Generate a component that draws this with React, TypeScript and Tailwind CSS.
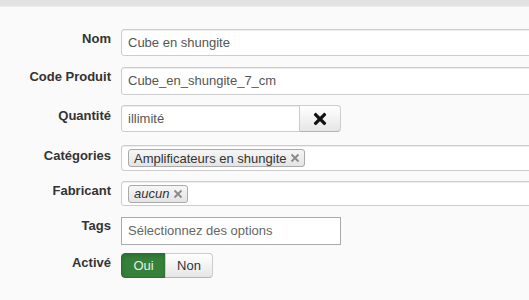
import { FaTimes } from 'react-icons/fa'

const font = { fontFamily: '"Liberation Sans", Arial, sans-serif' }

function Label({ children }: { children: React.ReactNode }) {
  return (
    <div className="w-[111px] shrink-0 text-right text-[13px] font-bold leading-[16px] text-[#333] pt-[2px]">
      {children}
    </div>
  )
}

function ChipX() {
  return (
    <svg width="10" height="10" viewBox="0 0 10 10" className="ml-[4px]">
      <path d="M1.5 1.5 L8.5 8.5 M8.5 1.5 L1.5 8.5" stroke="#8a8a8a" strokeWidth="1.8" />
    </svg>
  )
}

function Chip({ children, italic }: { children: React.ReactNode; italic?: boolean }) {
  return (
    <span className="flex items-center h-[18px] pl-[5px] pr-[4px] rounded-[3px] border border-[#aaa] bg-gradient-to-b from-[#f6f6f6] to-[#e4e4e4] text-[13px] text-[#333] leading-[13px]">
      <span className={italic ? 'italic' : ''}>{children}</span>
      <ChipX />
    </span>
  )
}

const inputCls =
  'h-full bg-white border border-[#ccc] rounded-[3px] shadow-[inset_0_1px_1px_rgba(0,0,0,0.075)] text-[13px] text-[#555] flex items-center pl-[6px]'

export default function App() {
  return (
    <div className="w-[529px] h-[300px] bg-[#fafafa] overflow-hidden" style={font}>
      <div className="h-[7px] bg-[#e3e3e3] border-b border-[#ececec]" />

      <div className="pt-[22px]">
        <div className="flex h-[38px]">
          <Label>Nom</Label>
          <div className="ml-[10px] h-[27px] w-[450px] shrink-0">
            <div className={inputCls}>Cube en shungite</div>
          </div>
        </div>

        <div className="flex h-[38px]">
          <Label>Code Produit</Label>
          <div className="ml-[10px] h-[28px] w-[450px] shrink-0">
            <div className={inputCls}>Cube_en_shungite_7_cm</div>
          </div>
        </div>

        <div className="flex h-[40px]">
          <Label><span className="block pt-[1px]">Quantité</span></Label>
          <div className="ml-[10px] h-[27px] flex shrink-0">
            <div className={inputCls + ' w-[179px] rounded-r-none'}>illimité</div>
            <button className="w-[42px] h-full -ml-px flex items-center justify-center border border-[#ccc] border-b-[#b3b3b3] rounded-r-[4px] bg-gradient-to-b from-white to-[#e6e6e6] text-[#111]">
              <FaTimes size={18} />
            </button>
          </div>
        </div>

        <div className="flex h-[36px]">
          <Label><span className="block pt-[1px]">Catégories</span></Label>
          <div className="ml-[10px] h-[26px] w-[450px] shrink-0">
            <div className={inputCls + ' pl-[6px] border-[#c8c8c8]'}>
              <Chip>Amplificateurs en shungite</Chip>
            </div>
          </div>
        </div>

        <div className="flex h-[36px]">
          <Label>Fabricant</Label>
          <div className="ml-[10px] h-[25px] w-[450px] shrink-0">
            <div className={inputCls + ' pl-[6px] border-[#c8c8c8]'}>
              <Chip italic>aucun</Chip>
            </div>
          </div>
        </div>

        <div className="flex h-[36px]">
          <Label><span className="block -mt-[1px]">Tags</span></Label>
          <div className="ml-[10px] h-[28px] w-[220px] shrink-0">
            <div className="h-full bg-white border border-[#aaa] text-[13px] text-[#666] flex items-center pl-[6px]">
              Sélectionnez des options
            </div>
          </div>
        </div>

        <div className="flex h-[36px]">
          <Label>Activé</Label>
          <div className="ml-[10px] h-[25px] flex shrink-0 text-[13px]">
            <span className="w-[45px] h-full flex items-center justify-center rounded-l-[4px] bg-[#36803a] border border-[#2f6e32] text-[#e4f2e4] shadow-[inset_0_2px_4px_rgba(0,0,0,0.15)]">
              Oui
            </span>
            <span className="w-[48px] h-full -ml-px flex items-center justify-center rounded-r-[4px] border border-[#ccc] border-b-[#b3b3b3] bg-gradient-to-b from-white to-[#e6e6e6] text-[#333]">
              Non
            </span>
          </div>
        </div>
      </div>
    </div>
  )
}
